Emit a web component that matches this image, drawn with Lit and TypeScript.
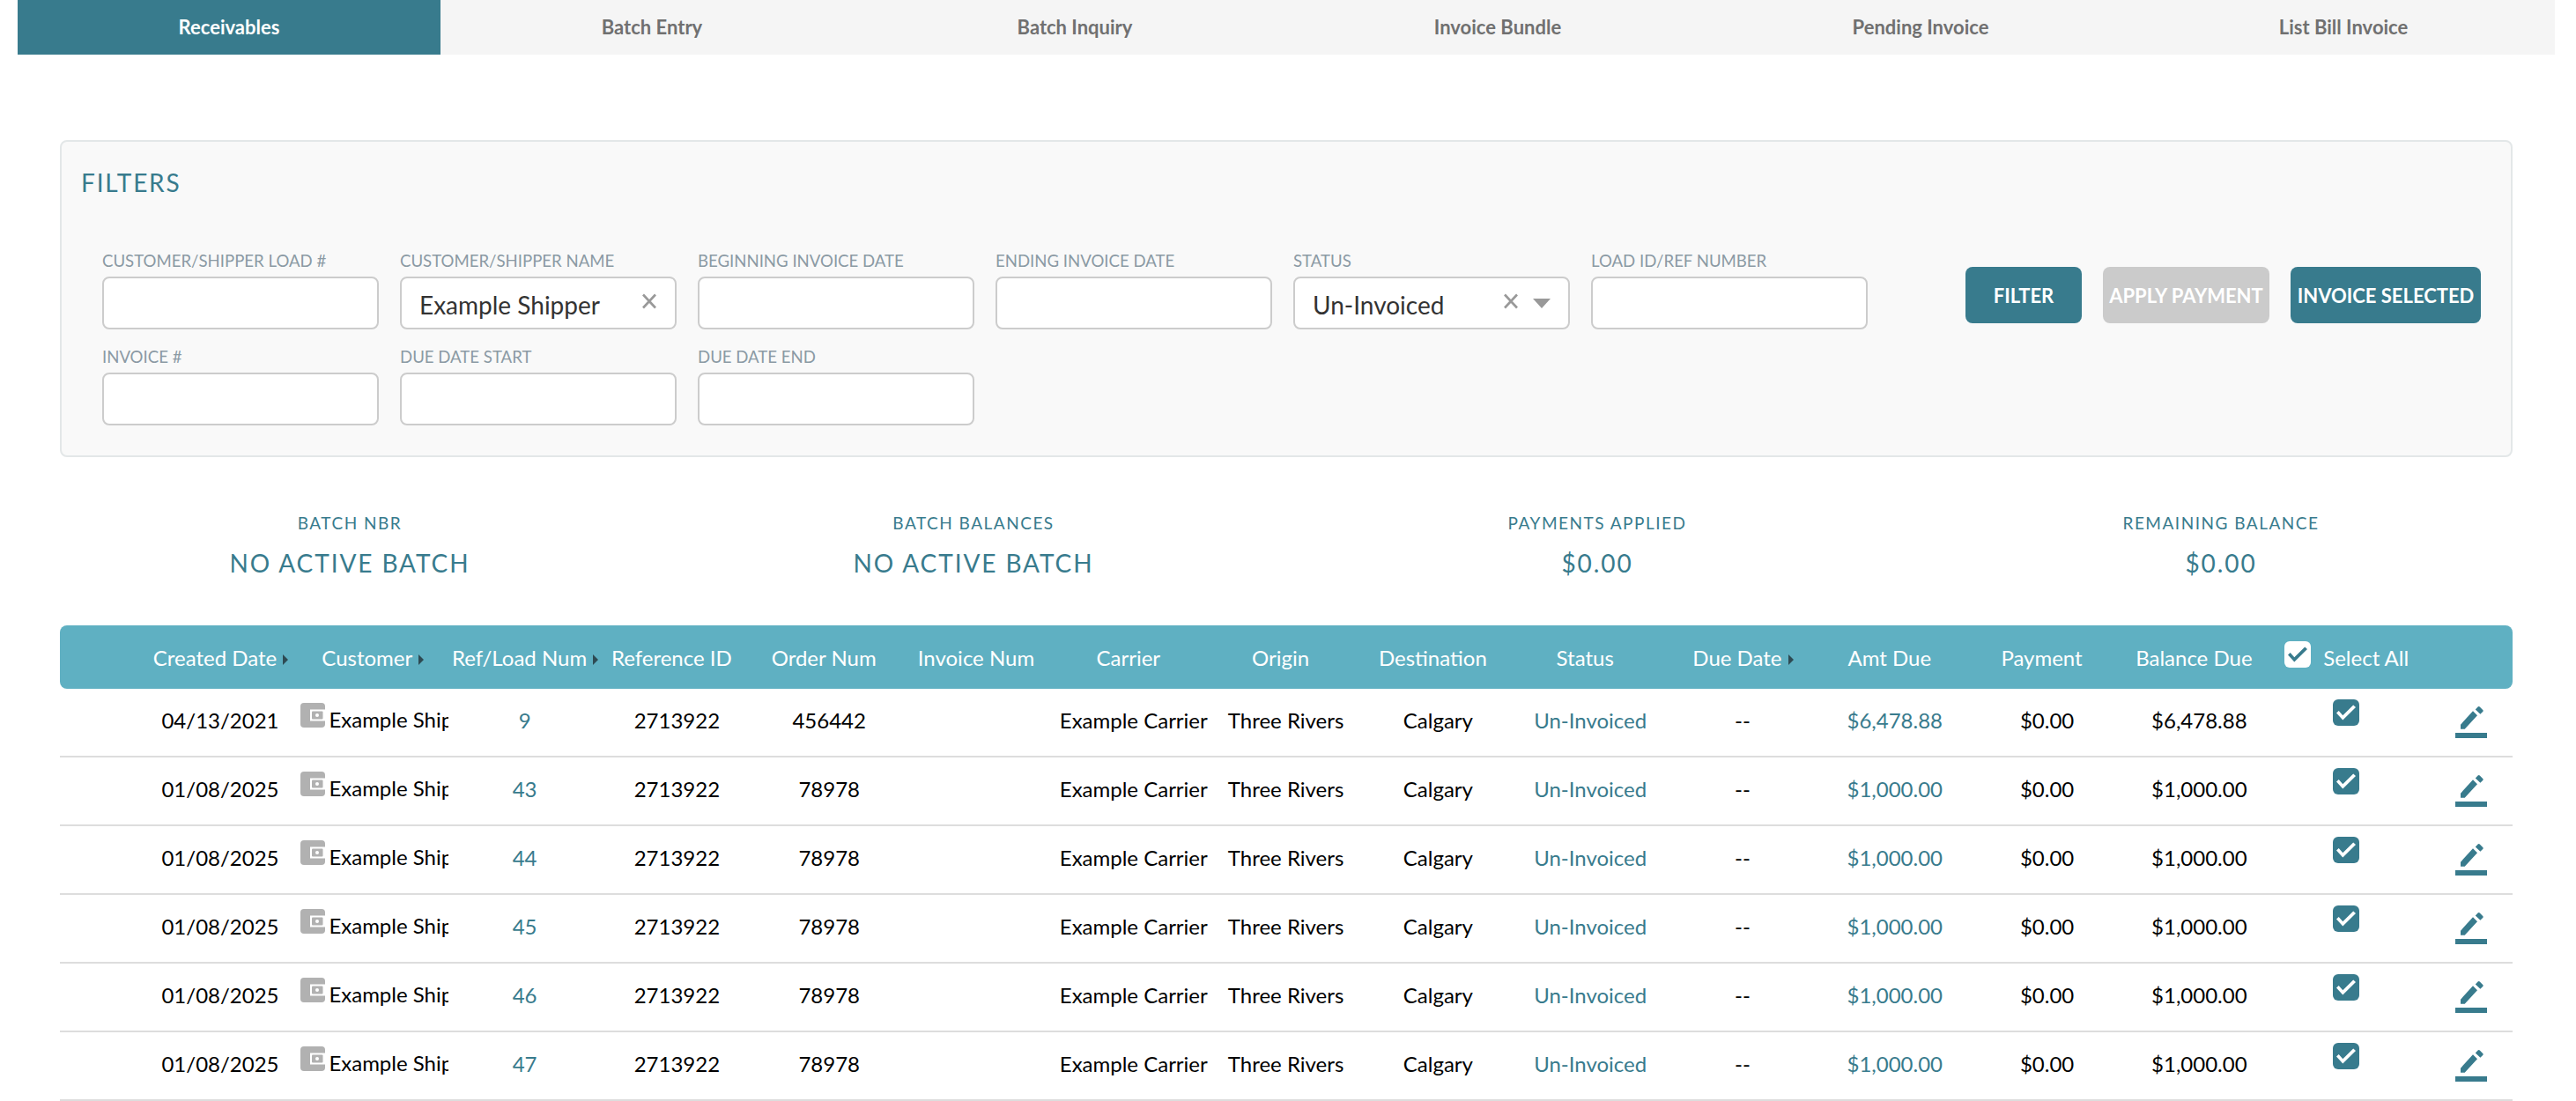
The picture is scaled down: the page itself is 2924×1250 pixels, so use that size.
import { LitElement, html, css, svg } from "lit";
import { customElement } from "lit/decorators.js";

const tabs = ["Receivables", "Batch Entry", "Batch Inquiry", "Invoice Bundle", "Pending Invoice", "List Bill Invoice"];
const heads: [string, boolean][] = [
  ["Created Date", true], ["Customer", true], ["Ref/Load Num", true], ["Reference ID", false], ["Order Num", false],
  ["Invoice Num", false], ["Carrier", false], ["Origin", false], ["Destination", false], ["Status", false],
  ["Due Date", true], ["Amt Due", false], ["Payment", false], ["Balance Due", false],
];
const rows = [
  ["04/13/2021", "9", "456442", "$6,478.88"],
  ["01/08/2025", "43", "78978", "$1,000.00"],
  ["01/08/2025", "44", "78978", "$1,000.00"],
  ["01/08/2025", "45", "78978", "$1,000.00"],
  ["01/08/2025", "46", "78978", "$1,000.00"],
  ["01/08/2025", "47", "78978", "$1,000.00"],
];
const stats = [
  ["BATCH NBR", "NO ACTIVE BATCH"], ["BATCH BALANCES", "NO ACTIVE BATCH"],
  ["PAYMENTS APPLIED", "$0.00"], ["REMAINING BALANCE", "$0.00"],
];

const cross = svg`<svg class="x" width="18" height="18" viewBox="0 0 18 18"><path d="M2 1.500 L16 16.500 M16 1.500 L2 16.500" stroke="#999" stroke-width="2.6" fill="none"/></svg>`;
const check = (c: string) => svg`<svg width="30" height="30" viewBox="0 0 30 30"><path d="M4 15.500 L11.300 23.500 L26 9 L23.200 6.500 L11.300 18.300 L6.700 13 Z" fill="${c}"/></svg>`;
const customerIcon = svg`<svg class="cust" width="28" height="28" viewBox="0 0 28 28"><rect width="28" height="28" rx="4" fill="#b1b1b1"/><rect x="11" y="7.500" width="17" height="13" fill="#fff"/><rect x="13" y="9.500" width="12.500" height="9" rx="1" fill="#b1b1b1"/><circle cx="19" cy="14" r="2" fill="#fff"/></svg>`;
const pencil = svg`<svg class="pen" width="36" height="36" viewBox="0 0 36 36"><path d="M6 20.700 L20 5.300 L25 10.300 L10.700 25.700 H6 Z M22.800 3.400 L25.600 .6 Q26.700 -.4 27.800 .6 L31.200 3.900 Q32.200 5 31.200 6 L28.400 8.800 Z" fill="#387b8d"/><rect y="30" width="36" height="6" fill="#387b8d"/></svg>`;

@customElement("app-root")
export class AppRoot extends LitElement {
  static styles = css`
    :host { display: block; width: 2924px; height: 1250px; overflow: hidden; background: #fff; font-family: Lato, "Open Sans", sans-serif; color: #000; }
    .tabs { display: grid; grid-template-columns: repeat(6, 480px); margin-left: 20px; height: 62px; }
    .tab { box-sizing: border-box; padding-bottom: 2px; background: #f5f5f5; color: #707070; font-size: 22px; font-weight: 700; display: flex; align-items: center; justify-content: center; }
    .tab.on { background: #387b8d; color: #fff; }
    .panel { box-sizing: border-box; margin: 97px 0 0 68px; width: 2784px; height: 360px; background: #f9f9f9; border: 2px solid #e3e7e8; border-radius: 8px; padding: 26px 0 0 22px; }
    .title { font-size: 28px; line-height: 40px; color: #387b8d; letter-spacing: 1.800px; }
    .body { display: flex; margin: 57px 0 0 24px; }
    .fields { display: grid; grid-template-columns: repeat(6, 314px); column-gap: 24px; row-gap: 19px; width: 2000px; }
    .label { font-size: 18.600px; line-height: 24px; color: #8b9aa4; height: 24px; margin-bottom: 6px; white-space: nowrap; }
    .input { box-sizing: border-box; height: 60px; background: #fff; border: 2px solid #ccc; border-radius: 8px; display: flex; align-items: center; padding: 0 20px 0 20px; font-size: 28px; color: #333; }
    .input span { flex: 1; margin-top: 4px; }
    .x { margin-top: -4px; }
    .tri { width: 0; height: 0; border-left: 10px solid transparent; border-right: 10px solid transparent; border-top: 11px solid #999; margin-left: 16px; }
    .btns { display: flex; gap: 24px; height: 64px; padding-top: 19px; margin-left: 115px; }
    .btn { height: 64px; border-radius: 8px; background: #387b8d; color: #fff; font-size: 22px; font-weight: 700; display: flex; align-items: center; justify-content: center; white-space: nowrap; }
    .btn.dis { background: #cbcbcb; }
    .stats { display: grid; grid-template-columns: repeat(4, 708px); margin: 63px 0 0 43px; text-align: center; color: #387b8d; }
    .s1 { font-size: 19px; line-height: 24px; letter-spacing: 1.500px; }
    .s2 { font-size: 28px; line-height: 40px; letter-spacing: 1.900px; margin-top: 13px; }
    .thead { box-sizing: border-box; margin: 51px 0 0 68px; width: 2784px; height: 72px; background: #5fb0c2; border-radius: 8px; display: grid; grid-template-columns: repeat(15, 172.800px); padding-left: 89.600px; align-items: center; color: #fff; font-size: 24px; }
    .th { white-space: nowrap; display: flex; justify-content: center; align-items: center; }
    .caret { width: 0; height: 0; border-top: 6px solid transparent; border-bottom: 6px solid transparent; border-left: 6px solid #2e4a53; margin: 6px -13px 0 7px; }
    .sel { justify-content: flex-start; gap: 14px; padding-left: 16.500px; }
    .box { width: 30px; height: 30px; background: #fff; border-radius: 6px; margin-top: -6px; }
    .tr { box-sizing: border-box; margin-left: 68px; width: 2784px; height: 78px; border-bottom: 2px solid #ddd; padding-bottom: 6px; display: grid; grid-template-columns: repeat(15, 172.800px) 1fr; padding-left: 95.600px; align-items: center; font-size: 24px; }
    .td { text-align: center; white-space: nowrap; }
    .link { color: #387b8d; }
    .cust-cell { display: flex; align-items: flex-start; overflow: hidden; padding-left: 5px; height: 70px; }
    .cust { margin-top: 16px; flex: none; margin-right: 4px; }
    .cust-cell span { line-height: 70px; white-space: nowrap; flex: none; }
    .cb { align-self: start; margin: 12px 0 0 65.400px; width: 30px; height: 30px; background: #387b8d; border-radius: 6px; }
    .pen { align-self: start; margin: 20px 0 0 31px; overflow: visible; }
  `;

  render() {
    const label = (t: string) => html`<div class="label">${t}</div>`;
    const empty = (t: string) => html`<div>${label(t)}<div class="input"></div></div>`;
    return html`
      <div class="tabs">${tabs.map((t, i) => html`<div class="tab ${i === 0 ? "on" : ""}">${t}</div>`)}</div>
      <div class="panel">
        <div class="title">FILTERS</div>
        <div class="body">
          <div class="fields">
            ${empty("CUSTOMER/SHIPPER LOAD #")}
            <div>${label("CUSTOMER/SHIPPER NAME")}<div class="input"><span>Example Shipper</span>${cross}</div></div>
            ${empty("BEGINNING INVOICE DATE")}
            ${empty("ENDING INVOICE DATE")}
            <div>${label("STATUS")}<div class="input"><span>Un-Invoiced</span>${cross}<i class="tri"></i></div></div>
            ${empty("LOAD ID/REF NUMBER")}
            ${empty("INVOICE #")}
            ${empty("DUE DATE START")}
            ${empty("DUE DATE END")}
          </div>
          <div class="btns">
            <div class="btn" style="width:132px">FILTER</div>
            <div class="btn dis" style="width:189px">APPLY PAYMENT</div>
            <div class="btn" style="width:216px">INVOICE SELECTED</div>
          </div>
        </div>
      </div>
      <div class="stats">${stats.map((s) => html`<div><div class="s1">${s[0]}</div><div class="s2">${s[1]}</div></div>`)}</div>
      <div class="thead">
        ${heads.map(([t, c]) => html`<div class="th">${t}${c ? html`<i class="caret"></i>` : ""}</div>`)}
        <div class="th sel"><div class="box">${check("#387b8d")}</div>Select All</div>
      </div>
      ${rows.map((r) => html`
        <div class="tr">
          <div class="td">${r[0]}</div>
          <div class="cust-cell">${customerIcon}<span>Example Shipper</span></div>
          <div class="td link">${r[1]}</div>
          <div class="td">2713922</div>
          <div class="td">${r[2]}</div>
          <div class="td"></div>
          <div class="td">Example Carrier</div>
          <div class="td">Three Rivers</div>
          <div class="td">Calgary</div>
          <div class="td link">Un-Invoiced</div>
          <div class="td">--</div>
          <div class="td link">${r[3]}</div>
          <div class="td">$0.00</div>
          <div class="td">${r[3]}</div>
          <div class="cb">${check("#fff")}</div>
          ${pencil}
        </div>`)}
    `;
  }
}
